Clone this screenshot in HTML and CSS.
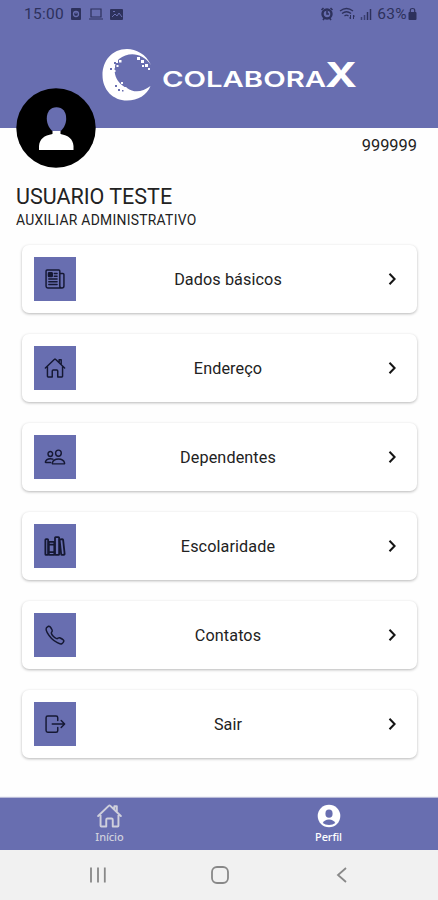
FILE: index.html
```html
<!DOCTYPE html>
<html lang="pt-BR">
<head>
<meta charset="utf-8">
<meta name="viewport" content="width=device-width, initial-scale=1">
<title>Colaborax</title>
<link rel="stylesheet" href="styles.css">
</head>
<body>
<div class="app">
  <header class="header">
    <div class="status">
      <span class="clock">15:00</span>
      <svg class="status-left" width="56" height="16" viewBox="0 0 56 16">
        <rect x="1" y="2" width="10" height="12" rx="1" fill="currentColor"/>
        <circle cx="6" cy="8" r="2.500" fill="none" stroke="#686eb0" stroke-width="1.300"/>
        <path d="M6 5v3" stroke="#686eb0"/>
        <path d="M21 3h10v8H21zM19 13h14" fill="none" stroke="currentColor" stroke-width="1.200"/>
        <rect x="40" y="3" width="13" height="11" rx="1" fill="currentColor"/>
        <path d="M42 11l3-3 2 2 2-3 3 4M43 5.500h2" fill="none" stroke="#686eb0"/>
      </svg>
      <svg class="status-right" width="54" height="16" viewBox="0 0 54 16">
        <circle cx="7" cy="8" r="4.500" fill="none" stroke="currentColor" stroke-width="2.400"/>
        <path d="M1.500 4l2-2M12.500 4l-2-2M3 14l1.500-2M11 14l-1.500-2M7 5v3h2" fill="none" stroke="currentColor" stroke-width="1.600"/>
        <path d="M20 5q6.500-5 13 0M22 7.500q4.500-3.500 9 0M24.500 10q2-1.600 4 0" fill="none" stroke="currentColor" stroke-width="1.300"/>
        <path d="M30.500 9v4M33.500 9v4M29.500 11.500l1 1.500M34.500 10.500l-1-1.500" fill="none" stroke="currentColor"/>
        <path d="M41.500 11v3M44.500 9v5" stroke="currentColor" opacity=".75" stroke-width="1.500"/>
        <path d="M47.500 6v8M50.500 3v11" stroke="currentColor" stroke-width="1.500"/>
      </svg>
      <span class="battery">63%</span>
      <svg class="lock" width="9" height="14" viewBox="0 0 9 14">
        <rect x="0.500" y="5" width="8" height="8" rx="1" fill="currentColor"/>
        <path d="M2.300 6V3.200q0-1.700 2.200-1.700t2.200 1.700V6" fill="none" stroke="currentColor" stroke-width="1.200"/>
      </svg>
    </div>
    <svg class="logo" width="260" height="54" viewBox="100 48 260 54" fill="#fff" role="img" aria-label="Colaborax">
      <path d="M151 65C146 54 136 49 127 49C112 49 102.500 61 102.500 75C102.500 90 113 100.500 127 100.500C138 100.500 147 95 150.500 86C142 92.500 134 93 127 88C114 83 111 66 119 59C129 51 143 53 151 65Z"/>
      <path d="M115 60h3v3h-3zM119 60h2.500v2.500H119zM112 65h3v3h-3zM116.500 65h2v2h-2zM113 70h2.500v2H113zM137 57h3v3h-3zM141 60h3v3h-3zM145 64h3v3h-3zM142 65h2v2h-2zM148 68h2v2h-2zM116 82h3v3h-3zM121 82h2v2h-2zM119 86h3v3h-3zM124 87h2.500v2.500H124z"/>
      <g fill="#686eb0">
        <path d="M114 62h2v2h-2zM110 68h2v2h-2zM118 63h1.500v1.500H118zM140 57h1.500v2H140zM144 60h1.500v2H144zM115 85h2v2h-2zM118 89h2v2h-2zM122 90h1.500v1.500H122z"/>
      </g>
      <text class="wordmark" x="162" y="87.300" textLength="164" lengthAdjust="spacingAndGlyphs">COLABORA</text>
      <text class="wordmark-x" x="325" y="87.300" textLength="32" lengthAdjust="spacingAndGlyphs">X</text>
    </svg>
  </header>

  <section class="profile">
    <div class="profile-top">
      <svg class="avatar" width="80" height="80" viewBox="0 0 80 80">
        <circle cx="40" cy="40" r="39.700" fill="#000"/>
        <path d="M36.500 43h8v3c8 1.500 12.500 5 13 12v4H23v-4c.5-7 5-10.500 13.500-12z" fill="#fff"/>
        <path d="M40.500 19.300c6 0 9.700 4.500 9.700 11.200 0 6-3 10.500-5.700 12.500h-8c-2.700-2-5.700-6.500-5.700-12.500 0-6.700 3.700-11.200 9.700-11.200z" fill="#686eb0"/>
      </svg>
      <span class="code">999999</span>
    </div>
    <h1 class="name">USUARIO TESTE</h1>
    <p class="role">AUXILIAR ADMINISTRATIVO</p>
  </section>

  <main class="menu">
    <a class="card">
      <span class="tile"><svg class="icon" viewBox="0 0 512 512">
        <path d="M368 415.860V72a24.070 24.070 0 0 0-24-24H72a24.070 24.070 0 0 0-24 24v352a40.120 40.120 0 0 0 40 40h328M416 464a48 48 0 0 1-48-48V128h72a24 24 0 0 1 24 24v264a48 48 0 0 1-48 48zM240 128h64M240 192h64M112 256h192M112 320h192M112 384h192"/>
        <rect x="104" y="112" width="88" height="88" rx="16" fill="currentColor"/></svg></span>
      <span class="label">Dados básicos</span>
      <svg class="chevron" viewBox="0 0 8 14"><path d="M1.500 1.700L6.600 7l-5.100 5.300"/></svg>
    </a>
    <a class="card">
      <span class="tile"><svg class="icon" viewBox="0 0 512 512">
        <path d="M80 212v236a16 16 0 0 0 16 16h96V328a24 24 0 0 1 24-24h80a24 24 0 0 1 24 24v136h96a16 16 0 0 0 16-16V212M480 256L266.890 52c-5-5.280-16.690-5.340-21.780 0L32 256M400 179V64h-48v69"/></svg></span>
      <span class="label">Endereço</span>
      <svg class="chevron" viewBox="0 0 8 14"><path d="M1.500 1.700L6.600 7l-5.100 5.300"/></svg>
    </a>
    <a class="card">
      <span class="tile"><svg class="icon" viewBox="0 0 512 512">
        <path d="M402 168c-2.930 40.670-33.100 72-66 72s-63.120-31.320-66-72c-3-42.310 26.370-72 66-72s69 30.460 66 72zM336 304c-65.170 0-127.840 32.370-143.540 95.410-2.080 8.340 3.150 16.590 11.720 16.590h263.650c8.570 0 13.770-8.250 11.720-16.590C463.850 335.360 401.180 304 336 304zM200 185.940c-2.340 32.480-26.720 58.060-53 58.060s-50.700-25.570-53-58.060C91.610 152.150 115.340 128 147 128s55.390 24.770 53 57.940zM206 306c-18.050-8.270-37.930-11.450-59-11.450-52 0-102.100 25.850-114.650 76.200-1.650 6.660 2.530 13.250 9.370 13.250H154"/></svg></span>
      <span class="label">Dependentes</span>
      <svg class="chevron" viewBox="0 0 8 14"><path d="M1.500 1.700L6.600 7l-5.100 5.300"/></svg>
    </a>
    <a class="card">
      <span class="tile"><svg class="icon icon-books" viewBox="0 0 512 512">
        <rect x="32" y="96" width="64" height="368" rx="16"/>
        <path d="M112 224h128M112 400h128"/>
        <rect x="112" y="160" width="128" height="304" rx="16"/>
        <rect x="256" y="48" width="96" height="416" rx="16"/>
        <path d="M422.460 96.110l-40.400 4.250c-11.120 1.170-19.180 11.570-17.930 23.100l34.920 321.590c1.260 11.530 11.370 20 22.490 18.840l40.400-4.250c11.120-1.170 19.180-11.570 17.930-23.100L445 115c-1.310-11.580-11.420-20.060-22.540-18.890z"/></svg></span>
      <span class="label">Escolaridade</span>
      <svg class="chevron" viewBox="0 0 8 14"><path d="M1.500 1.700L6.600 7l-5.100 5.300"/></svg>
    </a>
    <a class="card">
      <span class="tile"><svg class="icon" viewBox="0 0 512 512">
        <path d="M451 374c-15.880-16-54.340-39.350-73-48.760-24.300-12.240-26.300-13.240-45.400.95-12.740 9.470-21.210 17.930-36.120 14.750s-47.310-21.110-75.680-49.390-47.340-61.620-50.530-76.480 5.410-23.230 14.790-36c13.220-18 12.220-21 .92-45.300-8.810-18.900-32.840-57-48.900-72.800C119.900 44 119.900 47 108.830 51.600A160.150 160.150 0 0 0 83 65.370C67 76 58.120 84.830 51.910 98.100s-9 44.380 23.070 102.640 54.570 88.050 101.140 134.490S258.500 406.640 310.850 436c64.760 36.270 89.600 29.200 102.910 23s22.180-15 32.830-31a159.090 159.090 0 0 0 13.800-25.800C465 391.170 468 391.170 451 374z"/></svg></span>
      <span class="label">Contatos</span>
      <svg class="chevron" viewBox="0 0 8 14"><path d="M1.500 1.700L6.600 7l-5.100 5.300"/></svg>
    </a>
    <a class="card">
      <span class="tile"><svg class="icon" viewBox="0 0 512 512">
        <path d="M320 336v76c0 22-18 36-40 36H88a40 40 0 0 1-40-40V112a40 40 0 0 1 40-40h192c22 0 40 14 40 36v68M400 336l80-80-80-80M192 256h280"/></svg></span>
      <span class="label">Sair</span>
      <svg class="chevron" viewBox="0 0 8 14"><path d="M1.500 1.700L6.600 7l-5.100 5.300"/></svg>
    </a>
  </main>

  <nav class="tabs">
    <a class="tab">
      <svg width="27" height="26" viewBox="0 0 512 512" fill="none" stroke="currentColor" stroke-width="38" stroke-linecap="round" stroke-linejoin="round">
        <path d="M80 212v236a16 16 0 0 0 16 16h96V328a24 24 0 0 1 24-24h80a24 24 0 0 1 24 24v136h96a16 16 0 0 0 16-16V212M480 256L266.890 52c-5-5.280-16.690-5.340-21.780 0L32 256M400 179V64h-48v69"/></svg>
      <span>Início</span>
    </a>
    <a class="tab tab-active">
      <svg width="26" height="26" viewBox="0 0 26 26">
        <circle cx="13" cy="13" r="11.300" fill="currentColor"/>
        <ellipse cx="13" cy="10.700" rx="3.600" ry="4.100" fill="#686eb0"/>
        <path d="M6.700 20q1.800-3.500 6.300-3.500t6.300 3.500q-2.500 2.100-6.300 2.100T6.700 20z" fill="#686eb0"/></svg>
      <span>Perfil</span>
    </a>
  </nav>

  <footer class="system">
    <svg width="18" height="18" viewBox="0 0 18 18"><path d="M2 1.500v15M9 1.500v15M15.800 1.500v15"/></svg>
    <svg width="20" height="20" viewBox="0 0 20 20"><rect x="2" y="2" width="16" height="16" rx="5"/></svg>
    <svg width="18" height="18" viewBox="0 0 18 18"><path d="M13 2L5 9l8 7"/></svg>
  </footer>
</div>
</body>
</html>
```
FILE: styles.css
```css
* { box-sizing: border-box; }
body { margin: 0; background: #fff; font-family: Roboto, sans-serif; color: #222; }
.app { width: 438px; height: 900px; display: flex; flex-direction: column; overflow: hidden; background: #fefefe; }

.header { height: 128px; flex: none; background: #686eb0; }
.status { height: 28px; display: flex; align-items: center; padding: 0 21px 0 24px; color: #2d315c; }
.clock { width: 46px; font-size: 15.5px; letter-spacing: 0.3px; }
.status-right { margin-left: auto; }
.battery { font-size: 15.5px; margin-left: 3px; letter-spacing: 0.3px; }
.lock { margin-left: 1px; }
.logo { display: block; margin: 20px 0 0 100px; }
.wordmark { font: 600 21.5px Inter, sans-serif; }
.wordmark-x { font: 700 34.3px Inter, sans-serif; }

.profile { height: 117px; flex: none; padding: 0 21px 0 16px; }
.profile-top { height: 57px; display: flex; justify-content: space-between; }
.avatar { margin-top: -40px; flex: none; }
.code { font-size: 16.4px; line-height: 20px; margin-top: 8px; }
.name { margin: 0; font-size: 21.5px; line-height: 24px; font-weight: 400; }
.role { margin: 3px 0 0; font-size: 13.9px; line-height: 16px; letter-spacing: 0.27px; }

.menu { flex: 1; display: flex; flex-direction: column; gap: 21.1px; padding: 0 21px 0 22px; }
.card { height: 68px; flex: none; display: grid; grid-template-columns: 42px 1fr 20px; align-items: center; padding: 0 16px 0 12px; border-radius: 7px; background: #fff; box-shadow: 0 1px 3px rgba(0, 0, 0, 0.28); }
.tile { height: 44px; display: grid; place-items: center; background: #686eb0; color: #151833; }
.icon { width: 22px; height: 22px; fill: none; stroke: currentColor; stroke-width: 34; stroke-linecap: round; stroke-linejoin: round; }
.icon-books { stroke-width: 42; }
.label { text-align: center; font-size: 16.2px; letter-spacing: 0.1px; padding-right: 1px; }
.chevron { width: 8px; height: 14px; justify-self: end; margin-right: 5px; fill: none; stroke: #151515; stroke-width: 2; }

.tabs { height: 52px; flex: none; display: grid; grid-template-columns: 1fr 1fr; background: #686eb0; box-shadow: 0 -1px 1px #b9bbd8; }
.tab { display: flex; flex-direction: column; align-items: center; padding-top: 5px; color: #cfd0dc; font: 500 11px/14px "Noto Sans", sans-serif; letter-spacing: -0.1px; gap: 1px; }
.tab-active { color: #fff; }
.system { height: 50px; flex: none; display: flex; align-items: center; justify-content: space-between; padding: 0 87px 0 89px; background: #f1f1f1; fill: none; stroke: #888; stroke-width: 1.8; }
```
